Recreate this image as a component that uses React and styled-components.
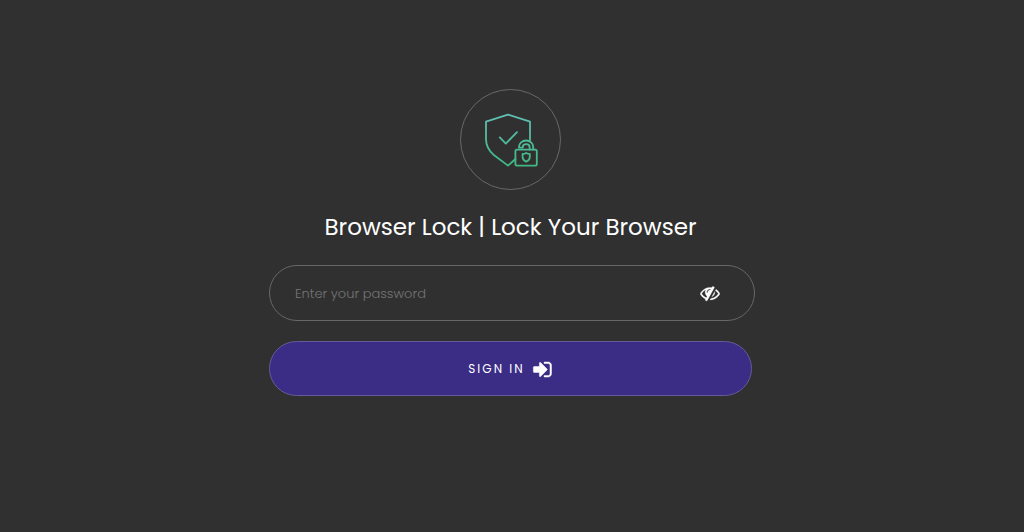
import React, {useState} from 'react';
import styled, {createGlobalStyle} from 'styled-components';

const GlobalStyle = createGlobalStyle`
  *, *::before, *::after {
    box-sizing: border-box;
  }
  body {
    margin: 0;
    background: #303030;
    color: #fff;
    font-family: Poppins, Inter, "Liberation Sans", sans-serif;
  }
`;

const Page = styled.main`
  display: flex;
  justify-content: center;
  align-items: center;
  min-height: 100vh;
  padding: 24px 24px 72px;
`;

const LoginForm = styled.form`
  display: flex;
  flex-direction: column;
  width: 100%;
  max-width: 486px;
`;

const Header = styled.header`
  display: flex;
  flex-direction: column;
  align-items: center;
  margin: 0 3px 20px 0;
`;

const Logo = styled.div`
  display: flex;
  justify-content: center;
  align-items: center;
  width: 101px;
  height: 101px;
  border: 1px solid #686868;
  border-radius: 50%;
`;

const Title = styled.h1`
  margin: 19px 0 0;
  font-size: 23px;
  font-weight: 400;
  line-height: 36px;
  text-align: center;
`;

const Field = styled.div`
  display: flex;
  align-items: center;
  height: 56px;
  margin-bottom: 20px;
  padding: 0 34px 0 25px;
  border: 1px solid #686868;
  border-radius: 28px;
`;

const PasswordInput = styled.input`
  flex: 1;
  min-width: 0;
  height: 100%;
  padding: 2px 0 0;
  border: 0;
  outline: 0;
  background: transparent;
  color: #fff;
  font: inherit;
  font-size: 13px;
  font-weight: 300;
  &::placeholder {
    color: #757575;
    opacity: 1;
  }
`;

const ToggleButton = styled.button`
  display: flex;
  padding: 0;
  border: 0;
  background: none;
  color: #fff;
  cursor: pointer;
`;

const SubmitButton = styled.button`
  display: flex;
  justify-content: center;
  align-items: center;
  gap: 7px;
  height: 55px;
  margin-right: 3px;
  padding: 2px 0 0;
  border: 1px solid #655b96;
  border-radius: 28px;
  background: #3b2c85;
  color: #fff;
  font: inherit;
  font-size: 12px;
  letter-spacing: 2px;
  text-transform: uppercase;
  cursor: pointer;
`;

const ShieldIcon = () => (
  <svg width="54" height="56" viewBox="0 -2 54 56" fill="none" aria-hidden="true">
    <defs>
      <linearGradient id="shield" gradientUnits="userSpaceOnUse" x1="0" y1="0" x2="0" y2="54">
        <stop offset="0" stopColor="#62bdb5" />
        <stop offset="1" stopColor="#3fb881" />
      </linearGradient>
    </defs>
    <g stroke="url(#shield)" strokeWidth="1.8" strokeLinecap="round" strokeLinejoin="round">
      <path d="M46 27V8.6L24 1.6 2 8.6V26c0 6.5 2.8 11.5 7.5 15.7L24 52.6l7.5-6.6" />
      <path d="M15.8 24.4l6 6.2L33 19.2" />
      <rect x="31.4" y="36.6" width="21.4" height="16" rx="1.6" />
      <path d="M35 34.4V34a7.1 6.5 0 0 1 14.2 0v2.6M35 34.6h3.8V34a3.4 2.8 0 0 1 6.8 0v2.6" />
      <path d="M42.2 40c-1 .7-2.2 1-3.6 1v3c0 2.2 1.4 3.8 3.6 4.8 2.2-1 3.6-2.6 3.6-4.8v-3c-1.4 0-2.6-.3-3.6-1z" />
    </g>
  </svg>
);

const EyeSlashIcon = () => (
  <svg width="20" height="20" viewBox="-20 0 1832 1792" fill="currentColor" stroke="currentColor" strokeWidth="20" aria-hidden="true">
    <path d="M555 1335l78-141q-87-63-136-159t-49-203q0-121 61-225-229 117-381 353 167 258 427 375zm389-759q0-20-14-34t-34-14q-125 0-214.5 89.5t-89.5 214.5q0 20 14 34t34 14 34-14 14-34q0-86 61-147t147-61q20 0 34-14t14-34zm363-191q0 7-1 9-105 188-315 566t-316 567l-49 89q-10 16-28 16-12 0-134-70-16-10-16-28 0-12 44-87-143-65-263.5-173t-208.5-245q-20-31-20-69t20-69q153-235 380-371t496-136q89 0 180 17l54-97q10-16 28-16 5 0 18 6t31 15.5 33 18.5 31.5 18.5 19.5 11.5q16 10 16 27zm37 447q0 139-79 253.5t-209 164.5l280-502q8 45 8 84zm448 128q0 35-20 69-39 64-109 145-150 172-347.5 267t-419.5 95l74-132q212-18 392.5-137t301.5-307q-115-179-282-294l63-112q95 64 182.5 153t144.5 182q20 34 20 69z" />
  </svg>
);

const SignInIcon = () => (
  <svg width="21" height="21" viewBox="0 0 1792 1792" fill="currentColor" stroke="currentColor" strokeWidth="40" aria-hidden="true">
    <path d="M1301 896q0 26-19 45l-544 544q-19 19-45 19t-45-19-19-45v-288h-448q-26 0-45-19t-19-45v-384q0-26 19-45t45-19h448v-288q0-26 19-45t45-19 45 19l544 544q19 19 19 45zm363-352v704q0 119-84.5 203.5t-203.5 84.5h-320q-13 0-22.5-9.5t-9.5-22.5q0-4-1-20t-.5-26.5 3-23.5 10-19.5 20.5-6.5h320q66 0 113-47t47-113v-704q0-66-47-113t-113-47h-312l-11.5-1-11.5-3-8-5.5-7-9-2-13.5q0-4-1-20t-.5-26.5 3-23.5 10-19.5 20.5-6.5h320q119 0 203.5 84.5t84.5 203.5z" />
  </svg>
);

const App = () => {
  const [visible, setVisible] = useState(false);

  return (
    <>
      <GlobalStyle />
      <Page>
        <LoginForm onSubmit={e => e.preventDefault()}>
          <Header>
            <Logo>
              <ShieldIcon />
            </Logo>
            <Title>Browser Lock | Lock Your Browser</Title>
          </Header>
          <Field>
            <PasswordInput
              type={visible ? 'text' : 'password'}
              placeholder="Enter your password"
              aria-label="Enter your password"
            />
            <ToggleButton
              type="button"
              aria-label="Show password"
              aria-pressed={visible}
              onClick={() => setVisible(!visible)}
            >
              <EyeSlashIcon />
            </ToggleButton>
          </Field>
          <SubmitButton type="submit">
            Sign in
            <SignInIcon />
          </SubmitButton>
        </LoginForm>
      </Page>
    </>
  );
};

export default App;
